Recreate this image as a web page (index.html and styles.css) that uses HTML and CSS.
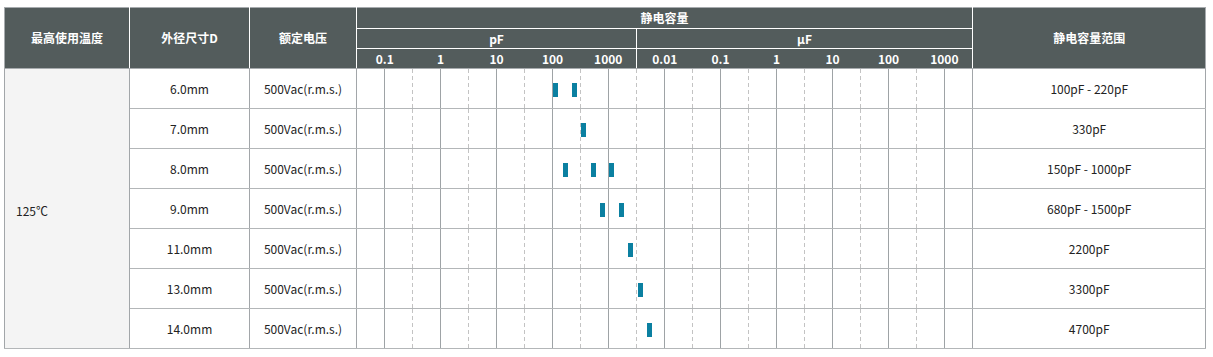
FILE: index.html
```html
<!DOCTYPE html>
<html lang="zh-CN">
<head>
<meta charset="utf-8">
<title>静电容量</title>
<link rel="stylesheet" href="styles.css">
</head>
<body>
<div class="page">
<table class="spec">
  <colgroup>
    <col class="c-temp"><col class="c-dia"><col class="c-volt">
    <col class="c-tick"><col class="c-tick"><col class="c-tick"><col class="c-tick"><col class="c-tick"><col class="c-tick"><col class="c-tick"><col class="c-tick"><col class="c-tick"><col class="c-tick"><col class="c-tick">
    <col class="c-tick"><col class="c-tick"><col class="c-tick"><col class="c-tick"><col class="c-tick"><col class="c-tick"><col class="c-tick"><col class="c-tick"><col class="c-tick"><col class="c-tick"><col class="c-tick">
    <col class="c-range">
  </colgroup>
  <thead>
    <tr class="h1">
      <th rowspan="3" class="side first">最高使用温度</th>
      <th rowspan="3" class="side">外径尺寸D</th>
      <th rowspan="3" class="side">额定电压</th>
      <th colspan="22" class="top">静电容量</th>
      <th rowspan="3" class="side last">静电容量范围</th>
    </tr>
    <tr class="h2">
      <th colspan="10" class="unit">pF</th>
      <th colspan="12" class="unit">µF</th>
    </tr>
    <tr class="h3">
      <th colspan="2" class="scale">0.1</th>
      <th colspan="2" class="scale">1</th>
      <th colspan="2" class="scale">10</th>
      <th colspan="2" class="scale">100</th>
      <th colspan="2" class="scale split">1000</th>
      <th colspan="2" class="scale">0.01</th>
      <th colspan="2" class="scale">0.1</th>
      <th colspan="2" class="scale">1</th>
      <th colspan="2" class="scale">10</th>
      <th colspan="2" class="scale">100</th>
      <th colspan="2" class="scale">1000</th>
    </tr>
  </thead>
  <tbody>
    <tr>
      <td rowspan="7" class="temp">125℃</td>
      <td>6.0mm</td>
      <td>500Vac(r.m.s.)</td>
      <td colspan="22" class="chart"><div class="plot">
        <span class="tick"></span><span class="tick"></span><span class="tick"></span><span class="tick"></span><span class="tick"></span><span class="tick"></span><span class="tick"></span><span class="tick"></span><span class="tick"></span><span class="tick"></span><span class="tick"></span>
        <span class="tick"></span><span class="tick"></span><span class="tick"></span><span class="tick"></span><span class="tick"></span><span class="tick"></span><span class="tick"></span><span class="tick"></span><span class="tick"></span><span class="tick"></span><span class="tick"></span>
        <span class="bar" style="left:196px"></span><span class="bar" style="left:215px"></span>
      </div></td>
      <td>100pF - 220pF</td>
    </tr>
    <tr>
      <td>7.0mm</td>
      <td>500Vac(r.m.s.)</td>
      <td colspan="22" class="chart"><div class="plot">
        <span class="tick"></span><span class="tick"></span><span class="tick"></span><span class="tick"></span><span class="tick"></span><span class="tick"></span><span class="tick"></span><span class="tick"></span><span class="tick"></span><span class="tick"></span><span class="tick"></span>
        <span class="tick"></span><span class="tick"></span><span class="tick"></span><span class="tick"></span><span class="tick"></span><span class="tick"></span><span class="tick"></span><span class="tick"></span><span class="tick"></span><span class="tick"></span><span class="tick"></span>
        <span class="bar" style="left:224px"></span>
      </div></td>
      <td>330pF</td>
    </tr>
    <tr>
      <td>8.0mm</td>
      <td>500Vac(r.m.s.)</td>
      <td colspan="22" class="chart"><div class="plot">
        <span class="tick"></span><span class="tick"></span><span class="tick"></span><span class="tick"></span><span class="tick"></span><span class="tick"></span><span class="tick"></span><span class="tick"></span><span class="tick"></span><span class="tick"></span><span class="tick"></span>
        <span class="tick"></span><span class="tick"></span><span class="tick"></span><span class="tick"></span><span class="tick"></span><span class="tick"></span><span class="tick"></span><span class="tick"></span><span class="tick"></span><span class="tick"></span><span class="tick"></span>
        <span class="bar" style="left:206px"></span><span class="bar" style="left:234px"></span><span class="bar" style="left:252px"></span>
      </div></td>
      <td>150pF - 1000pF</td>
    </tr>
    <tr>
      <td>9.0mm</td>
      <td>500Vac(r.m.s.)</td>
      <td colspan="22" class="chart"><div class="plot">
        <span class="tick"></span><span class="tick"></span><span class="tick"></span><span class="tick"></span><span class="tick"></span><span class="tick"></span><span class="tick"></span><span class="tick"></span><span class="tick"></span><span class="tick"></span><span class="tick"></span>
        <span class="tick"></span><span class="tick"></span><span class="tick"></span><span class="tick"></span><span class="tick"></span><span class="tick"></span><span class="tick"></span><span class="tick"></span><span class="tick"></span><span class="tick"></span><span class="tick"></span>
        <span class="bar" style="left:243px"></span><span class="bar" style="left:262px"></span>
      </div></td>
      <td>680pF - 1500pF</td>
    </tr>
    <tr>
      <td>11.0mm</td>
      <td>500Vac(r.m.s.)</td>
      <td colspan="22" class="chart"><div class="plot">
        <span class="tick"></span><span class="tick"></span><span class="tick"></span><span class="tick"></span><span class="tick"></span><span class="tick"></span><span class="tick"></span><span class="tick"></span><span class="tick"></span><span class="tick"></span><span class="tick"></span>
        <span class="tick"></span><span class="tick"></span><span class="tick"></span><span class="tick"></span><span class="tick"></span><span class="tick"></span><span class="tick"></span><span class="tick"></span><span class="tick"></span><span class="tick"></span><span class="tick"></span>
        <span class="bar" style="left:271px"></span>
      </div></td>
      <td>2200pF</td>
    </tr>
    <tr>
      <td>13.0mm</td>
      <td>500Vac(r.m.s.)</td>
      <td colspan="22" class="chart"><div class="plot">
        <span class="tick"></span><span class="tick"></span><span class="tick"></span><span class="tick"></span><span class="tick"></span><span class="tick"></span><span class="tick"></span><span class="tick"></span><span class="tick"></span><span class="tick"></span><span class="tick"></span>
        <span class="tick"></span><span class="tick"></span><span class="tick"></span><span class="tick"></span><span class="tick"></span><span class="tick"></span><span class="tick"></span><span class="tick"></span><span class="tick"></span><span class="tick"></span><span class="tick"></span>
        <span class="bar" style="left:281px"></span>
      </div></td>
      <td>3300pF</td>
    </tr>
    <tr>
      <td>14.0mm</td>
      <td>500Vac(r.m.s.)</td>
      <td colspan="22" class="chart"><div class="plot">
        <span class="tick"></span><span class="tick"></span><span class="tick"></span><span class="tick"></span><span class="tick"></span><span class="tick"></span><span class="tick"></span><span class="tick"></span><span class="tick"></span><span class="tick"></span><span class="tick"></span>
        <span class="tick"></span><span class="tick"></span><span class="tick"></span><span class="tick"></span><span class="tick"></span><span class="tick"></span><span class="tick"></span><span class="tick"></span><span class="tick"></span><span class="tick"></span><span class="tick"></span>
        <span class="bar" style="left:290px"></span>
      </div></td>
      <td>4700pF</td>
    </tr>
  </tbody>
</table>
</div>
</body>
</html>
```
FILE: styles.css
```css
html, body {
  margin: 0;
  padding: 0;
  background: #ffffff;
}

.page {
  padding: 7px 0 0 4px;
}

.spec {
  border-collapse: collapse;
  table-layout: fixed;
  width: 1202px;
  font-family: "Noto Sans CJK SC", "Noto Sans", sans-serif;
  font-size: 12px;
  color: #222222;
  border: 1px solid #a7abae;
}

.c-temp { width: 125px; }
.c-dia { width: 120px; }
.c-volt { width: 107px; }
.c-tick { width: 28px; }
.c-range { width: 233px; }

.spec th {
  background: #535c5c;
  color: #ffffff;
  font-weight: bold;
  padding: 0;
  line-height: 16px;
  text-align: center;
  vertical-align: middle;
  border: 1px solid #ffffff;
}

.spec .h1 th { border-top-color: #a7abae; }
.spec th.first { border-left-color: #a7abae; }
.spec th.last { border-right-color: #a7abae; }
.spec th.side { border-bottom-color: #a7abae; }

.spec .h1 .top { height: 20px; }
.spec .h2 th { height: 19px; }
.spec .h3 th { height: 19px; }

.spec th.scale {
  font-weight: bold;
  border-left: none;
  border-right: none;
  border-bottom-color: #a7abae;
}

.spec th.scale.split {
  border-right: 1px solid #ffffff;
}

.spec td {
  padding: 0;
  text-align: center;
  vertical-align: middle;
  line-height: 16px;
  border: 1px solid #b3b6b8;
  border-left-color: #a2a6a9;
  border-right-color: #a2a6a9;
}

.spec td.temp {
  background: #f4f4f4;
  text-align: left;
  padding-left: 11px;
  padding-top: 5px;
}

.spec td.chart {
  padding: 0;
}

.plot {
  position: relative;
  display: flex;
  height: 39px;
}

.tick {
  flex: 0 0 28px;
  box-sizing: border-box;
  border-right: 1px solid #9ea3a6;
}

.tick:nth-child(even) {
  border-right: none;
  background: linear-gradient(to bottom, #c3c3c3 0 4px, transparent 4px 7px) right top / 1px 7px repeat-y;
}

.tick:nth-child(22) {
  border-right: none;
  background: none;
}

.bar {
  position: absolute;
  top: 14px;
  width: 5px;
  height: 14px;
  background: #0b80a1;
}
```
